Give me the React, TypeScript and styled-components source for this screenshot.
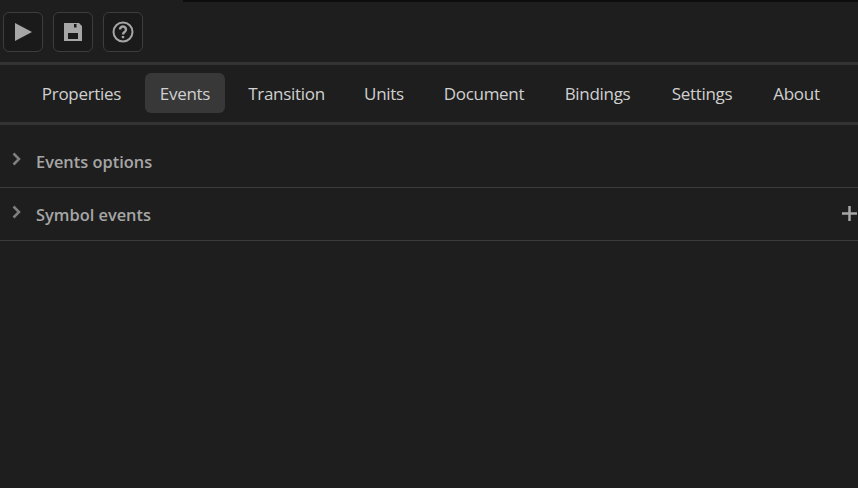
import React from "react";
import styled, { createGlobalStyle } from "styled-components";

const Global = createGlobalStyle`
  html, body {
    margin: 0;
    background: #1e1e1e;
  }
  body {
    font-family: "Open Sans", "Noto Sans", sans-serif;
    color: #d0d0d0;
  }
`;

const Page = styled.div`
  width: 858px;
  height: 488px;
  overflow: hidden;
  background: #1e1e1e;
`;

const TopStrip = styled.div`
  height: 2px;
  margin-left: 183px;
  background: #0d0d0d;
`;

const Toolbar = styled.div`
  display: flex;
  gap: 10px;
  height: 60px;
  padding: 10px 3px 0;
  box-sizing: border-box;
`;

const ToolButton = styled.button`
  display: flex;
  align-items: center;
  justify-content: center;
  width: 40px;
  height: 40px;
  padding: 0;
  border: 1px solid #3d3d3d;
  border-radius: 6px;
  background: #1a1a1a;
  color: #a6a6a6;
`;

const Tabs = styled.nav`
  display: flex;
  gap: 8px;
  height: 63px;
  padding: 8px 26px 0;
  box-sizing: border-box;
  border-top: 3px solid #333;
  border-bottom: 3px solid #333;
`;

const Tab = styled.div<{ $active?: boolean; $width: number }>`
  display: flex;
  flex: none;
  align-items: center;
  justify-content: center;
  width: ${({ $width }) => $width}px;
  height: 40px;
  border-radius: 6px;
  font-size: 17px;
  letter-spacing: -0.3px;
  white-space: nowrap;
  color: #d0d0d0;
  background: ${({ $active }) => ($active ? "#383838" : "transparent")};
`;

const Section = styled.div<{ $first?: boolean }>`
  display: flex;
  align-items: center;
  height: 52px;
  padding-top: ${({ $first }) => ($first ? "10px" : "0")};
  border-bottom: 1px solid #3c3c3c;
  color: #a6a6a6;
`;

const Chevron = styled.svg`
  width: 10px;
  height: 14px;
  margin: -4px 14px 0 12px;
  flex: none;
`;

const Title = styled.span`
  flex: 1;
  margin-top: 1px;
  font-size: 16.4px;
  font-weight: 600;
`;

const Plus = styled.svg`
  width: 15px;
  height: 15px;
  flex: none;
  margin: -2px 1px 0 0;
`;

function Arrow() {
  return (
    <Chevron viewBox="0 0 10 14" fill="none" stroke="#808080" strokeWidth="2.5">
      <path d="M1.500 1.500 7 7l-5.500 5.500" />
    </Chevron>
  );
}

const tabs = [
  { label: "Properties", width: 111 },
  { label: "Events", width: 80 },
  { label: "Transition", width: 107 },
  { label: "Units", width: 72 },
  { label: "Document", width: 112 },
  { label: "Bindings", width: 99 },
  { label: "Settings", width: 94 },
  { label: "About", width: 79 },
];

export default function App() {
  return (
    <Page>
      <Global />
      <TopStrip />
      <Toolbar>
        <ToolButton aria-label="Run">
          <svg width="18" height="18" viewBox="0 0 18 18" fill="currentColor">
            <path d="M1 0l17 9-17 9z" />
          </svg>
        </ToolButton>
        <ToolButton aria-label="Save">
          <svg width="18" height="18" viewBox="0 0 18 18" fill="currentColor">
            <path
              fillRule="evenodd"
              d="M0 0h15l3 3v15H0zM10 1v3.500h2.500V1zM4 10v6h10v-6z"
            />
          </svg>
        </ToolButton>
        <ToolButton aria-label="Help">
          <svg width="22" height="22" viewBox="0 0 22 22" fill="none" stroke="currentColor" strokeWidth="2">
            <circle cx="11" cy="11" r="9.500" />
            <path d="M8 8.500a3 3 0 1 1 4.600 2.500c-1 .7-1.600 1.200-1.600 2.500" strokeWidth="2.400" />
            <path d="M11 15v2.200" strokeWidth="2.400" />
          </svg>
        </ToolButton>
      </Toolbar>
      <Tabs>
        {tabs.map((t) => (
          <Tab key={t.label} $width={t.width} $active={t.label === "Events"}>
            {t.label}
          </Tab>
        ))}
      </Tabs>
      <Section $first>
        <Arrow />
        <Title>Events options</Title>
      </Section>
      <Section>
        <Arrow />
        <Title>Symbol events</Title>
        <Plus viewBox="0 0 15 15" stroke="#a6a6a6" strokeWidth="2.500">
          <path d="M0 7.500h15M7.500 0v15" />
        </Plus>
      </Section>
    </Page>
  );
}
